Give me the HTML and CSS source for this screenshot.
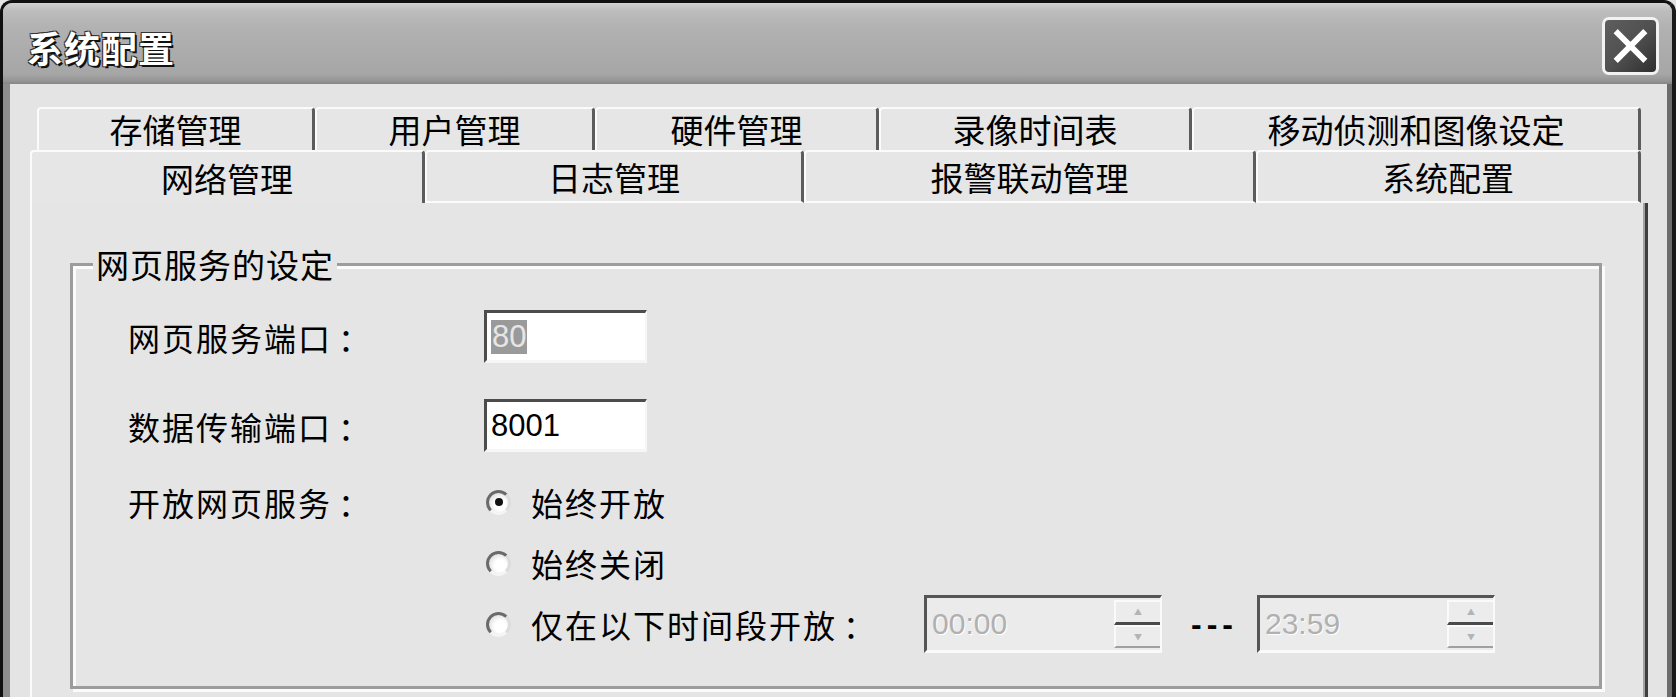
FILE: index.html
```html
<!DOCTYPE html>
<html lang="zh-CN">
<head>
<meta charset="utf-8">
<title>系统配置</title>
<link rel="stylesheet" href="styles.css">
</head>
<body>
<div class="window">
  <div class="titlebar">
    <span class="title">系统配置</span>
    <div class="close" aria-label="关闭">
      <svg width="52" height="54" viewBox="0 0 52 54">
        <path d="M13 14 L39 40 M39 14 L13 40" stroke="#fff" stroke-width="6" stroke-linecap="square" fill="none"/>
      </svg>
    </div>
  </div>
  <div class="body">
    <div class="tabrow row1">
      <div class="tab first">存储管理</div>
      <div class="tab">用户管理</div>
      <div class="tab">硬件管理</div>
      <div class="tab">录像时间表</div>
      <div class="tab">移动侦测和图像设定</div>
    </div>
    <div class="tabrow row2">
      <div class="tab first selected">网络管理</div>
      <div class="tab">日志管理</div>
      <div class="tab">报警联动管理</div>
      <div class="tab">系统配置</div>
    </div>
    <div class="panel">
      <fieldset class="group">
        <legend>网页服务的设定</legend>
        <div class="field f1">
          <span class="label">网页服务端口<span class="colon">：</span></span>
          <div class="input"><span class="sel">80</span></div>
        </div>
        <div class="field f2">
          <span class="label">数据传输端口<span class="colon">：</span></span>
          <div class="input">8001</div>
        </div>
        <div class="field f3">
          <span class="label">开放网页服务<span class="colon">：</span></span>
          <div class="radios">
            <div class="radio-row"><span class="radio checked"></span><span class="rtext">始终开放</span></div>
            <div class="radio-row"><span class="radio"></span><span class="rtext">始终关闭</span></div>
            <div class="radio-row">
              <span class="radio"></span><span class="rtext">仅在以下时间段开放<span class="colon">：</span></span>
              <div class="timebox first-time">
                <span class="ttext">00:00</span>
                <div class="spin"><span class="up">▲</span><span class="down">▼</span></div>
              </div>
              <span class="dash">---</span>
              <div class="timebox">
                <span class="ttext">23:59</span>
                <div class="spin"><span class="up">▲</span><span class="down">▼</span></div>
              </div>
            </div>
          </div>
        </div>
      </fieldset>
    </div>
  </div>
</div>
</body>
</html>
```
FILE: styles.css
```css
html, body {
  margin: 0;
  padding: 0;
  overflow: hidden;
}
body {
  width: 1676px;
  height: 697px;
  background: #e4e4e4;
  font-family: "Noto Sans CJK SC", "Noto Sans", sans-serif;
  color: #000;
}
.window {
  box-sizing: border-box;
  width: 1676px;
  height: 697px;
  border: 3px solid #111;
  border-right: 4px solid #1a1a1a;
  border-bottom: none;
  border-radius: 12px 12px 0 0;
  background: #e4e4e4;
  box-shadow: inset 7px 0 0 #8e8e8e, inset -5px 0 0 #6c6c6c;
  display: flex;
  flex-direction: column;
  overflow: hidden;
}
.titlebar {
  height: 79px;
  flex: none;
  display: flex;
  align-items: center;
  justify-content: space-between;
  padding: 0 13px 0 24px;
  background: linear-gradient(#d2d2d2 0, #bdbdbd 10%, #b2b2b2 30%, #acacac 60%, #a6a6a6 90%, #929292 100%);
  border-bottom: 2px solid #8a8a8a;
}
.title {
  margin-top: 8px;
  font-size: 36px;
  font-weight: 700;
  letter-spacing: 1px;
  color: #fff;
  line-height: 1;
  text-shadow: 2px 2px 0 #111, -1px -1px 0 #333, 1px -1px 0 #333, -1px 1px 0 #333;
}
.close {
  box-sizing: border-box;
  width: 57px;
  height: 58px;
  margin-top: 6px;
  border: 3px solid #f2f2f2;
  border-radius: 7px;
  background: linear-gradient(135deg, #5e5e5e 0%, #505050 50%, #2e2e2e 100%);
  display: flex;
  align-items: center;
  justify-content: center;
}
.body {
  flex: 1;
  display: flex;
  flex-direction: column;
  padding: 23px 24px 0 27px;
  min-height: 0;
}
.tabrow {
  display: grid;
  flex: none;
}
.row1 {
  height: 43px;
  margin-left: 7px;
  grid-template-columns: 278px 280px 284px 313px 449px;
  width: 1604px;
}
.row2 {
  height: 53px;
  grid-template-columns: 395px 379px 452px 385px;
  width: 1611px;
}
.tab {
  box-sizing: border-box;
  display: flex;
  align-items: center;
  justify-content: center;
  font-size: 33px;
  line-height: 1;
  background: #e6e6e6;
  border-top: 2px solid #fbfbfb;
  border-left: 2px solid #fbfbfb;
  border-right: 3px solid #5c5c5c;
  border-radius: 4px 4px 0 0;
}
.row2 .tab {
  border-bottom: 2px solid #fbfbfb;
  padding-top: 2px;
}
.row2 .tab.selected {
  border-bottom: none;
}
.panel {
  flex: 1;
  min-height: 0;
  background: #e5e5e5;
  border-left: 2px solid #fbfbfb;
  border-right: 3px solid #3e3e3e;
  box-shadow: inset -2px 0 0 #a2a2a2;
  display: flex;
  flex-direction: column;
}
.group {
  margin: 44px 43px 0 38px;
  padding: 29px 0 33px 55px;
  border: 3px solid #9c9c9c;
  box-shadow: 3px 3px 0 #fbfbfb, inset 3px 3px 0 #fbfbfb;
  min-width: 0;
}
.group legend {
  margin-left: -35px;
  padding: 0 3px;
  font-size: 33px;
  line-height: 34px;
  letter-spacing: 1px;
  background: #e5e5e5;
  position: relative;
}
.field {
  display: flex;
  align-items: center;
}
.f1 { height: 53px; }
.f2 { height: 53px; margin-top: 36px; }
.f3 { align-items: flex-start; margin-top: 21px; }
.label {
  width: 356px;
  flex: none;
  font-size: 32px;
  line-height: 58px;
  letter-spacing: 2px;
}
.colon {
  font-family: "Noto Sans CJK TC", "Noto Sans CJK SC", sans-serif;
  margin-left: 6px;
}
.input {
  box-sizing: border-box;
  width: 163px;
  height: 53px;
  background: #fff;
  border-top: 3px solid #4c4c4c;
  border-left: 3px solid #4c4c4c;
  border-right: 2px solid #f6f6f6;
  border-bottom: 3px solid #f6f6f6;
  padding-left: 4px;
  display: flex;
  align-items: center;
  font-family: "Liberation Sans", Arial, sans-serif;
  font-size: 31px;
}
.sel {
  background: #9a9a9a;
  color: #e6e6e6;
  padding: 0 1px;
  line-height: 34px;
}
.radios {
  display: flex;
  flex-direction: column;
  gap: 3px;
}
.radio-row {
  height: 58px;
  display: flex;
  align-items: center;
}
.radio {
  box-sizing: border-box;
  width: 25px;
  height: 25px;
  margin-left: 2px;
  flex: none;
  border-radius: 50%;
  border: 3px solid;
  border-color: #6a6a6a #dcdcdc #f4f4f4 #6a6a6a;
  background: radial-gradient(circle at 60% 60%, #fff 35%, #e2e2e2 75%);
  display: flex;
  align-items: center;
  justify-content: center;
}
.radio.checked::after {
  content: "";
  width: 8px;
  height: 8px;
  border-radius: 50%;
  background: #111;
}
.rtext {
  margin-left: 20px;
  font-size: 32px;
  letter-spacing: 2px;
  line-height: 1;
}
.timebox {
  box-sizing: border-box;
  width: 238px;
  height: 58px;
  background: #ebebeb;
  border-top: 3px solid #555;
  border-left: 3px solid #555;
  border-right: 2px solid #fafafa;
  border-bottom: 3px solid #fafafa;
  display: flex;
  align-items: stretch;
  justify-content: space-between;
}
.first-time {
  margin-left: 47px;
}
.ttext {
  align-self: center;
  padding-left: 5px;
  font-family: "Liberation Sans", Arial, sans-serif;
  font-size: 30px;
  color: #b0b0b0;
  text-shadow: 1px 1px 0 #fff;
}
.spin {
  width: 46px;
  display: flex;
  flex-direction: column;
  margin: 2px 0 2px 0;
}
.spin span {
  flex: 1;
  display: flex;
  align-items: center;
  justify-content: center;
  font-size: 8px;
  color: #b4b4b4;
  background: #ececec;
  border-top: 2px solid #fafafa;
  border-left: 2px solid #fafafa;
}
.spin .up {
  border-bottom: 3px solid #4a4a4a;
}
.spin .down {
  border-bottom: 2px solid #a0a0a0;
}
.dash {
  margin: 0 19px 0 29px;
  font-family: "Liberation Sans", Arial, sans-serif;
  font-weight: 700;
  font-size: 32px;
  letter-spacing: 5px;
  line-height: 1;
}
```
